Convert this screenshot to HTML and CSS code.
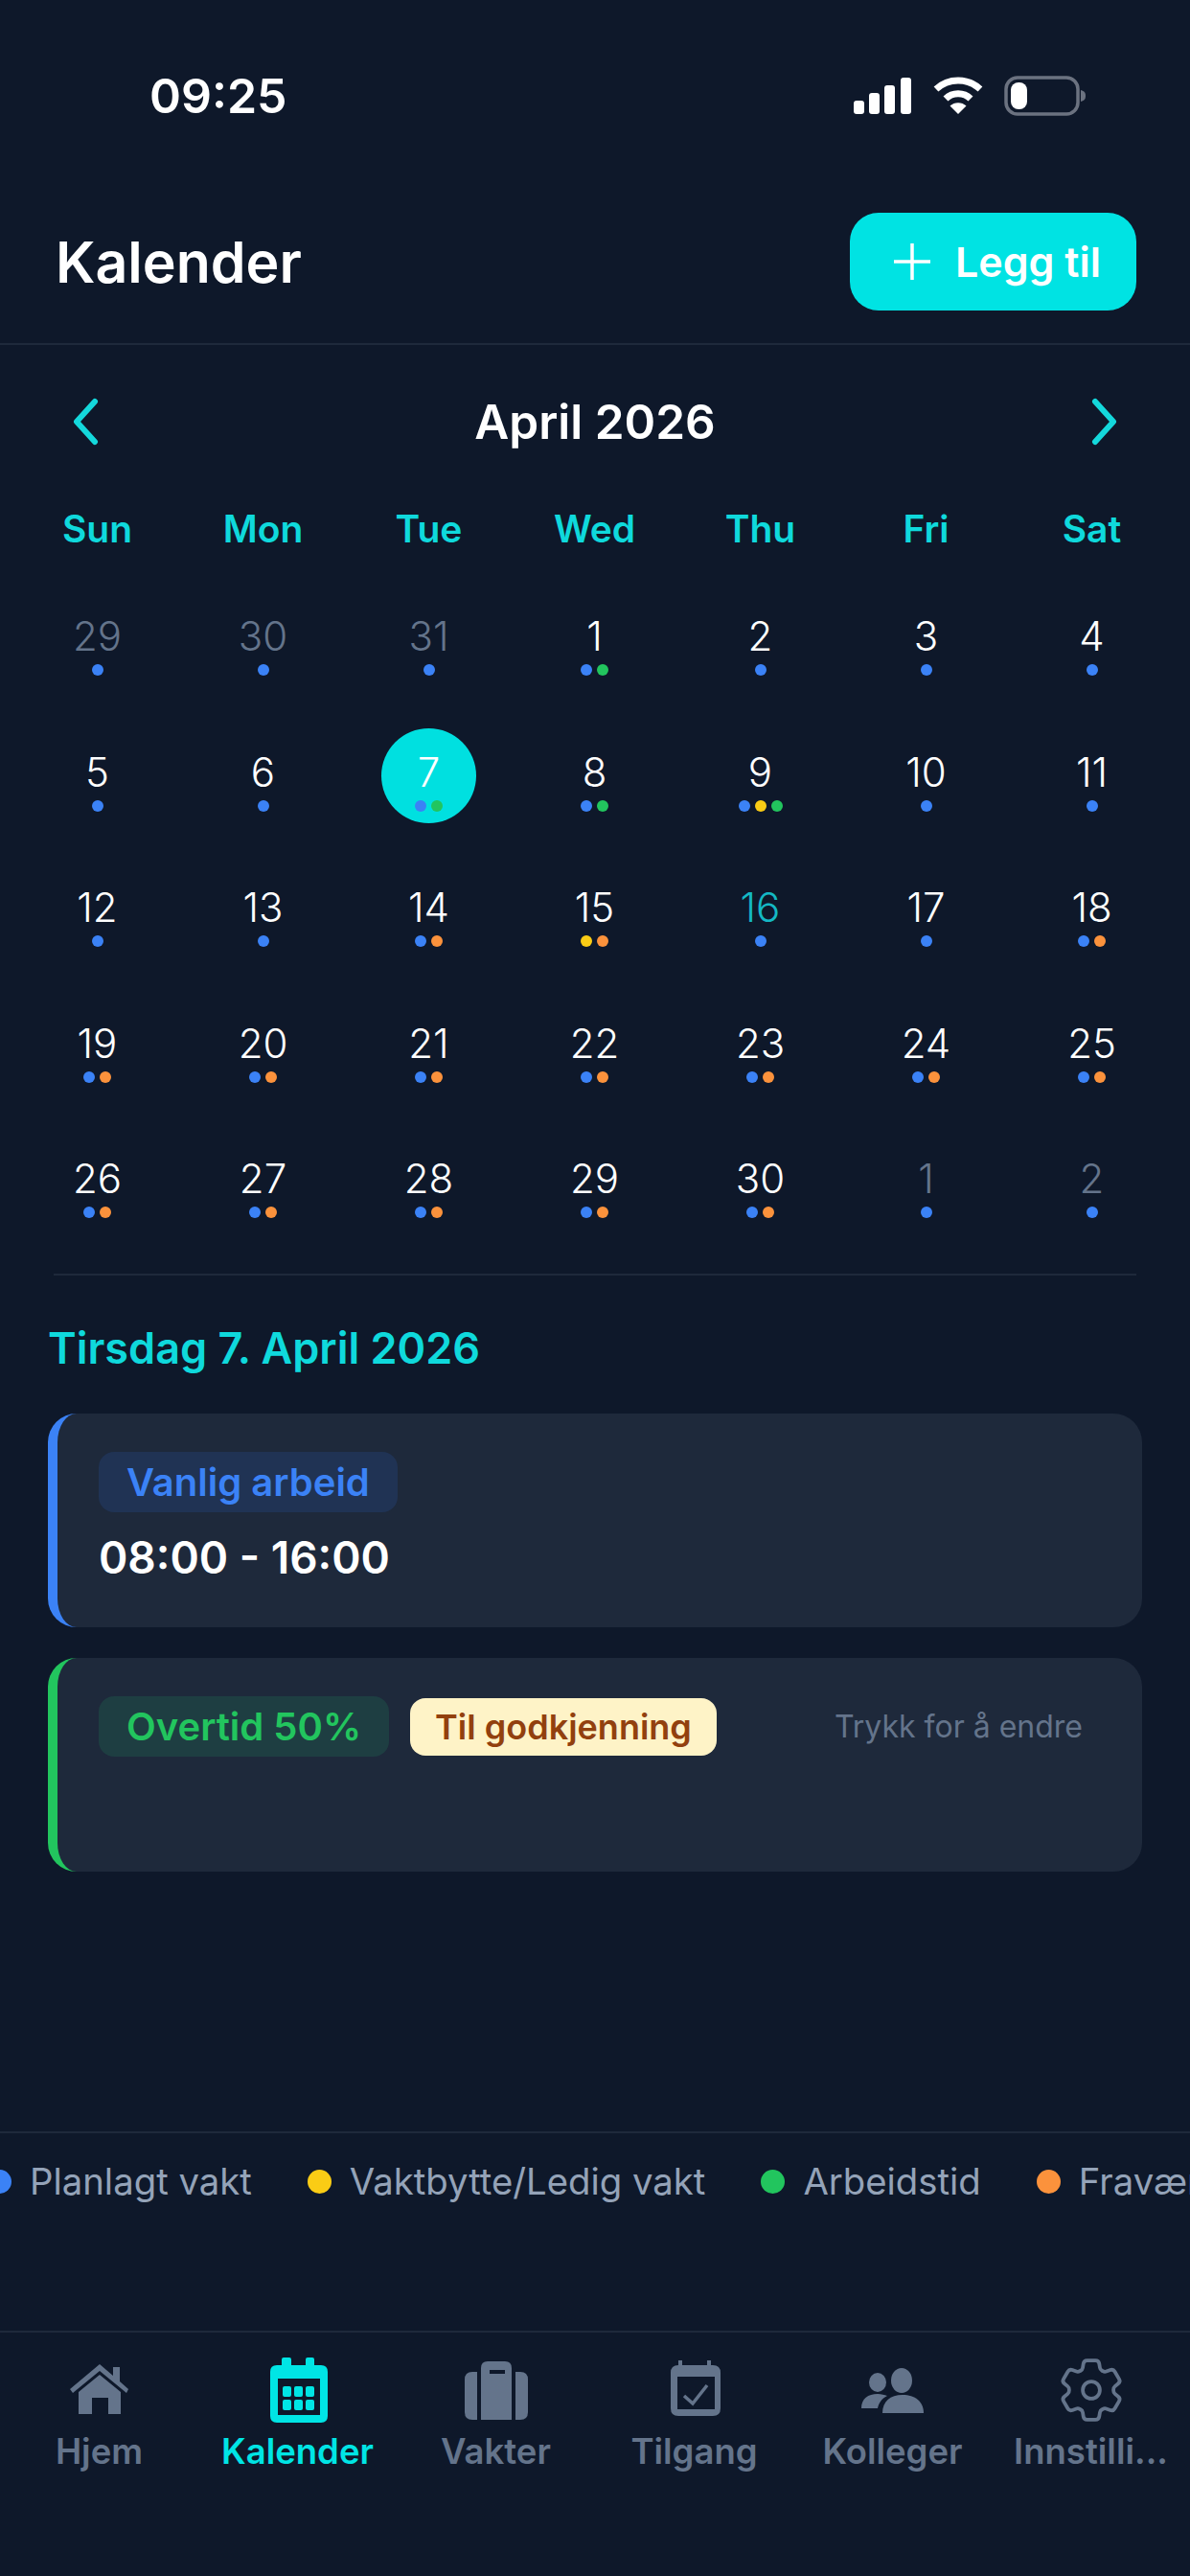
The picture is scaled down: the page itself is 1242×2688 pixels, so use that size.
FILE: index.html
```html
<!DOCTYPE html>
<html lang="nb">
<head>
  <meta charset="UTF-8" />
  <meta name="viewport" content="width=device-width, initial-scale=1.0" />
  <title>Kalender</title>
  <link rel="stylesheet" href="styles.css">
</head>
<body>
  <div class="status-bar">
    <span class="clock">09:25</span>
    <div class="status-icons">
      <svg class="signal" width="62" height="40" viewBox="0 0 62 40">
        <rect x="1" y="25" width="11" height="14" rx="3" />
        <rect x="17" y="17" width="11" height="22" rx="3" />
        <rect x="33" y="9" width="11" height="30" rx="3" />
        <rect x="50" y="1" width="11" height="38" rx="3" />
      </svg>
      <svg class="wifi" width="52" height="40" viewBox="0 0 52 40">
        <path d="M3 13 C16 1 36 1 49 13" />
        <path d="M13 23 C20 16 32 16 39 23" />
        <path class="wifi-tip" d="M17.5 30.5 C22 26 30 26 34.5 30.5 L26 39 Z" />
      </svg>
      <svg class="battery" width="86" height="42" viewBox="0 0 86 42">
        <rect x="2" y="2" width="75" height="38" rx="12" />
        <rect class="battery-level" x="7" y="7" width="17" height="28" rx="8" />
        <path class="battery-nub" d="M80 15 C84 16 85 18 85 21 C85 24 84 26 80 27 Z" />
      </svg>
    </div>
  </div>

  <header class="page-header">
    <h1>Kalender</h1>
    <button class="add-button">
      <svg width="44" height="44" viewBox="0 0 44 44"><path d="M22 3 V41 M3 22 H41" /></svg>
      Legg til
    </button>
  </header>

  <main class="content">
    <div class="month-nav">
      <svg width="30" height="50" viewBox="0 0 30 50"><path d="M25 4 L6 25 L25 46" /></svg>
      <span class="month-title">April 2026</span>
      <svg width="30" height="50" viewBox="0 0 30 50"><path d="M5 4 L24 25 L5 46" /></svg>
    </div>

    <div class="weekdays">
      <span>Sun</span><span>Mon</span><span>Tue</span><span>Wed</span><span>Thu</span><span>Fri</span><span>Sat</span>
    </div>

    <div class="days">
      <div class="day muted"><span>29</span><div class="dots"><i class="blue"></i></div></div>
      <div class="day muted"><span>30</span><div class="dots"><i class="blue"></i></div></div>
      <div class="day muted"><span>31</span><div class="dots"><i class="blue"></i></div></div>
      <div class="day"><span>1</span><div class="dots"><i class="blue"></i><i class="green"></i></div></div>
      <div class="day"><span>2</span><div class="dots"><i class="blue"></i></div></div>
      <div class="day"><span>3</span><div class="dots"><i class="blue"></i></div></div>
      <div class="day"><span>4</span><div class="dots"><i class="blue"></i></div></div>

      <div class="day"><span>5</span><div class="dots"><i class="blue"></i></div></div>
      <div class="day"><span>6</span><div class="dots"><i class="blue"></i></div></div>
      <div class="day selected"><span>7</span><div class="dots"><i class="blue"></i><i class="green"></i></div></div>
      <div class="day"><span>8</span><div class="dots"><i class="blue"></i><i class="green"></i></div></div>
      <div class="day"><span>9</span><div class="dots"><i class="blue"></i><i class="yellow"></i><i class="green"></i></div></div>
      <div class="day"><span>10</span><div class="dots"><i class="blue"></i></div></div>
      <div class="day"><span>11</span><div class="dots"><i class="blue"></i></div></div>

      <div class="day"><span>12</span><div class="dots"><i class="blue"></i></div></div>
      <div class="day"><span>13</span><div class="dots"><i class="blue"></i></div></div>
      <div class="day"><span>14</span><div class="dots"><i class="blue"></i><i class="orange"></i></div></div>
      <div class="day"><span>15</span><div class="dots"><i class="yellow"></i><i class="orange"></i></div></div>
      <div class="day today"><span>16</span><div class="dots"><i class="blue"></i></div></div>
      <div class="day"><span>17</span><div class="dots"><i class="blue"></i></div></div>
      <div class="day"><span>18</span><div class="dots"><i class="blue"></i><i class="orange"></i></div></div>

      <div class="day"><span>19</span><div class="dots"><i class="blue"></i><i class="orange"></i></div></div>
      <div class="day"><span>20</span><div class="dots"><i class="blue"></i><i class="orange"></i></div></div>
      <div class="day"><span>21</span><div class="dots"><i class="blue"></i><i class="orange"></i></div></div>
      <div class="day"><span>22</span><div class="dots"><i class="blue"></i><i class="orange"></i></div></div>
      <div class="day"><span>23</span><div class="dots"><i class="blue"></i><i class="orange"></i></div></div>
      <div class="day"><span>24</span><div class="dots"><i class="blue"></i><i class="orange"></i></div></div>
      <div class="day"><span>25</span><div class="dots"><i class="blue"></i><i class="orange"></i></div></div>

      <div class="day"><span>26</span><div class="dots"><i class="blue"></i><i class="orange"></i></div></div>
      <div class="day"><span>27</span><div class="dots"><i class="blue"></i><i class="orange"></i></div></div>
      <div class="day"><span>28</span><div class="dots"><i class="blue"></i><i class="orange"></i></div></div>
      <div class="day"><span>29</span><div class="dots"><i class="blue"></i><i class="orange"></i></div></div>
      <div class="day"><span>30</span><div class="dots"><i class="blue"></i><i class="orange"></i></div></div>
      <div class="day muted"><span>1</span><div class="dots"><i class="blue"></i></div></div>
      <div class="day muted"><span>2</span><div class="dots"><i class="blue"></i></div></div>
    </div>

    <section class="agenda">
      <h2>Tirsdag 7. April 2026</h2>
      <div class="shift-card shift-blue">
        <div class="shift-top">
          <span class="tag tag-blue">Vanlig arbeid</span>
        </div>
        <div class="shift-time">08:00 - 16:00</div>
      </div>
      <div class="shift-card shift-green">
        <div class="shift-top">
          <span class="tag tag-green">Overtid 50%</span>
          <span class="tag-pending">Til godkjenning</span>
          <span class="edit-hint">Trykk for å endre</span>
        </div>
      </div>
    </section>
  </main>

  <div class="legend">
    <div class="legend-track">
      <div class="legend-item"><i class="blue"></i>Planlagt vakt</div>
      <div class="legend-item"><i class="yellow"></i>Vaktbytte/Ledig vakt</div>
      <div class="legend-item"><i class="green"></i>Arbeidstid</div>
      <div class="legend-item"><i class="orange"></i>Fravær</div>
    </div>
  </div>

  <nav class="tabbar">
    <div class="tab">
      <svg width="72" height="72" viewBox="0 0 72 72">
        <path d="M50 12 H57 V27 L66 35 L64 39 L36 16 L8 39 L5 35 L36 9 L50 21 Z" />
        <path d="M14 38 L36 20 L58 38 V61 H45 V44 H28 V61 H14 Z" />
      </svg>
      <span>Hjem</span>
    </div>
    <div class="tab active">
      <svg width="72" height="72" viewBox="0 0 72 72">
        <path fill-rule="evenodd" d="M21 2 H27 Q29 2 29 4 V10 H44 V4 Q44 2 46 2 H51 Q53 2 53 4 V10 H60 Q67 10 67 17 V63 Q67 70 60 70 H14 Q7 70 7 63 V17 Q7 10 14 10 H19 V4 Q19 2 21 2 Z M15 24 V62 H59 V24 Z" />
        <rect x="20" y="32" width="9" height="11" rx="2" />
        <rect x="32" y="32" width="9" height="11" rx="2" />
        <rect x="44" y="32" width="9" height="11" rx="2" />
        <rect x="20" y="46" width="9" height="11" rx="2" />
        <rect x="32" y="46" width="9" height="11" rx="2" />
        <rect x="44" y="46" width="9" height="11" rx="2" />
      </svg>
      <span>Kalender</span>
    </div>
    <div class="tab">
      <svg width="72" height="72" viewBox="0 0 72 72">
        <path fill-rule="evenodd" d="M27 6 H45 Q52 6 52 13 V67 H20 V13 Q20 6 27 6 Z M29 15 V19 H45 V15 Z" />
        <path d="M16 17 V67 H11 Q3 67 3 59 V25 Q3 17 11 17 Z" />
        <path d="M56 17 V67 H61 Q69 67 69 59 V25 Q69 17 61 17 Z" />
      </svg>
      <span>Vakter</span>
    </div>
    <div class="tab">
      <svg width="72" height="72" viewBox="0 0 72 72">
        <path fill-rule="evenodd" d="M19 5 H23 V10 H49 V5 H53 V10 H55 Q63 10 63 18 V55 Q63 63 55 63 H19 Q11 63 11 55 V18 Q11 10 19 10 Z M18 22 V56 H57 V22 Z" />
        <path class="tab-stroke" d="M25 42 L34 50 L49 31" />
      </svg>
      <span>Tilgang</span>
    </div>
    <div class="tab">
      <svg width="72" height="72" viewBox="0 0 72 72">
        <ellipse cx="45" cy="26" rx="11" ry="13" />
        <ellipse cx="20" cy="28" rx="9" ry="10" />
        <path d="M25 60 C25 48 33 41 46 41 C59 41 68 48 68 60 Z" />
        <path d="M3 55 C3 45 10 40 20 40 C24 40 27 41 30 42 C24 45 21 50 20 55 Z" />
      </svg>
      <span>Kolleger</span>
    </div>
    <div class="tab">
      <svg class="gear" width="72" height="72" viewBox="1.5 1.5 21 21">
        <path d="M9.594 3.94c.09-.542.56-.94 1.11-.94h2.593c.55 0 1.02.398 1.11.94l.213 1.281c.063.374.313.686.645.87.074.04.147.083.22.127.325.196.72.257 1.075.124l1.217-.456a1.125 1.125 0 0 1 1.37.49l1.296 2.247a1.125 1.125 0 0 1-.26 1.431l-1.003.827c-.293.241-.438.613-.43.992a7.723 7.723 0 0 1 0 .255c-.008.378.137.75.43.991l1.004.827c.424.35.534.955.26 1.43l-1.298 2.247a1.125 1.125 0 0 1-1.369.491l-1.217-.456c-.355-.133-.75-.072-1.076.124a6.47 6.47 0 0 1-.22.128c-.331.183-.581.495-.644.869l-.213 1.281c-.09.543-.56.94-1.11.94h-2.594c-.55 0-1.019-.398-1.11-.94l-.213-1.281c-.062-.374-.312-.686-.644-.87a6.52 6.52 0 0 1-.22-.127c-.325-.196-.72-.257-1.076-.124l-1.217.456a1.125 1.125 0 0 1-1.369-.49l-1.297-2.247a1.125 1.125 0 0 1 .26-1.431l1.004-.827c.292-.24.437-.613.43-.991a6.932 6.932 0 0 1 0-.255c.007-.38-.138-.751-.43-.992l-1.004-.827a1.125 1.125 0 0 1-.26-1.43l1.297-2.247a1.125 1.125 0 0 1 1.37-.491l1.216.456c.356.133.751.072 1.076-.124.072-.044.146-.086.22-.128.332-.183.582-.495.644-.869l.214-1.28Z" />
        <circle cx="12" cy="12" r="2.6" />
      </svg>
      <span>Innstilli...</span>
    </div>
  </nav>
</body>
</html>
```

FILE: styles.css
```css
* {
  box-sizing: border-box;
}

body {
  margin: 0;
  width: 1242px;
  height: 2688px;
  overflow: hidden;
  background: #0e182a;
  color: #fff;
  font-family: Inter, "Liberation Sans", sans-serif;
  display: flex;
  flex-direction: column;
}

/* status bar */
.status-bar {
  height: 200px;
  flex: none;
  display: flex;
  align-items: center;
  justify-content: space-between;
  padding: 0 108px 0 156px;
}

.clock {
  font-size: 50px;
  font-weight: 600;
}

.status-icons {
  display: flex;
  align-items: center;
  gap: 22px;
}

.signal {
  fill: #fff;
}

.wifi {
  fill: none;
  stroke: #fff;
  stroke-width: 7;
}

.wifi-tip {
  fill: #fff;
  stroke: none;
}

.battery {
  fill: none;
  stroke: #6b7280;
  stroke-width: 3.5;
}

.battery-level {
  fill: #fff;
  stroke: none;
}

.battery-nub {
  fill: #6b7280;
  stroke: none;
}

/* header */
.page-header {
  flex: none;
  display: flex;
  align-items: center;
  justify-content: space-between;
  padding: 22px 56px 34px 58px;
  border-bottom: 2px solid #1e293b;
}

.page-header h1 {
  margin: 0;
  font-size: 59px;
  font-weight: 600;
}

.add-button {
  width: 299px;
  height: 102px;
  padding: 0 0 0 6px;
  display: flex;
  align-items: center;
  justify-content: center;
  gap: 23px;
  border: 0;
  border-radius: 30px;
  background: #00e3e3;
  color: #fff;
  font-family: inherit;
  font-size: 43px;
  font-weight: 600;
}

.add-button svg {
  fill: none;
  stroke: #fff;
  stroke-width: 3.5;
}

/* month */
.content {
  flex: 1;
  min-height: 0;
}

.month-nav {
  height: 60px;
  margin-top: 50px;
  padding: 0 74px;
  display: flex;
  align-items: center;
  justify-content: space-between;
}

.month-nav svg {
  fill: none;
  stroke: #14d8dc;
  stroke-width: 6;
  stroke-linecap: round;
  stroke-linejoin: round;
}

.month-title {
  font-size: 49.5px;
  font-weight: 600;
}

.weekdays,
.days {
  display: grid;
  grid-template-columns: repeat(7, 173px);
  padding: 0 15px;
}

.weekdays {
  margin-top: 57px;
  text-align: center;
  color: #0fd9dc;
  font-size: 39px;
  font-weight: 600;
  line-height: 50px;
}

.days {
  margin-top: 41px;
  row-gap: 42.5px;
}

.day {
  height: 99px;
  width: 99px;
  justify-self: center;
  padding-top: 22px;
  border-radius: 50%;
  display: flex;
  flex-direction: column;
  align-items: center;
  font-size: 42px;
  font-weight: 300;
  line-height: 48px;
}

.day.muted {
  color: #64748b;
}

.day.today {
  color: #14b8c4;
}

.day.selected {
  background: #00e0e0;
}

.dots {
  display: flex;
  gap: 5px;
  margin-top: 5px;
}

.dots i {
  width: 12px;
  height: 12px;
  border-radius: 50%;
}

i.blue {
  background: #3b82f6;
}

i.green {
  background: #22c55e;
}

i.yellow {
  background: #facc15;
}

i.orange {
  background: #fb923c;
}

/* day detail */
.agenda {
  margin: 46px 50px 0;
  padding-top: 50px;
  position: relative;
}

.agenda::before {
  content: "";
  position: absolute;
  top: 0;
  left: 6px;
  right: 6px;
  height: 2px;
  background: #1e293b;
}

.agenda h2 {
  margin: 0 0 40px;
  font-size: 45px;
  font-weight: 600;
  line-height: 56px;
  color: #0fd9dc;
}

.shift-card {
  height: 223px;
  margin-bottom: 32px;
  padding: 40px 62px 0 43px;
  background: #1e293b;
  border-radius: 30px;
  border-left: 10px solid;
}

.shift-blue {
  border-left-color: #3b82f6;
}

.shift-green {
  border-left-color: #22c55e;
}

.shift-top {
  display: flex;
  align-items: center;
  gap: 22px;
}

.tag {
  height: 63px;
  padding: 0 29px;
  border-radius: 16px;
  display: flex;
  align-items: center;
  font-size: 40px;
  font-weight: 600;
}

.tag-blue {
  background: #203354;
  color: #3b82f6;
}

.tag-green {
  background: #1e3e42;
  color: #22c55e;
}

.tag-pending {
  height: 60px;
  padding: 0 26px;
  border-radius: 16px;
  display: flex;
  align-items: center;
  background: #fef3c7;
  color: #92400e;
  font-size: 36px;
  font-weight: 600;
}

.edit-hint {
  margin-left: auto;
  color: #64748b;
  font-size: 32px;
}

.shift-time {
  margin-top: 19px;
  font-size: 46px;
  font-weight: 600;
  line-height: 56px;
}

/* legend */
.legend {
  flex: none;
  height: 208px;
  padding-top: 30px;
  border-top: 2px solid #1e293b;
  overflow: hidden;
}

.legend-track {
  display: flex;
  gap: 58px;
  margin-left: -13px;
  white-space: nowrap;
}

.legend-item {
  display: flex;
  align-items: center;
  gap: 19px;
  color: #94a3b8;
  font-size: 38.3px;
  line-height: 40px;
}

.legend-item i {
  width: 25px;
  height: 25px;
  border-radius: 50%;
}

/* tabs */
.tabbar {
  flex: none;
  height: 256px;
  padding-top: 24px;
  border-top: 2px solid #1e293b;
  display: grid;
  grid-template-columns: repeat(6, 207px);
  align-items: start;
}

.tab {
  display: flex;
  flex-direction: column;
  align-items: center;
  gap: 6px;
  color: #64748b;
  fill: #64748b;
  font-size: 36.5px;
  font-weight: 600;
  line-height: 44px;
}

.tab.active {
  color: #00e5e5;
  fill: #00e5e5;
}

.tab-stroke {
  fill: none;
  stroke: #64748b;
  stroke-width: 3.5;
}

.gear {
  fill: none;
  stroke: #64748b;
  stroke-width: 1.1;
}
```
